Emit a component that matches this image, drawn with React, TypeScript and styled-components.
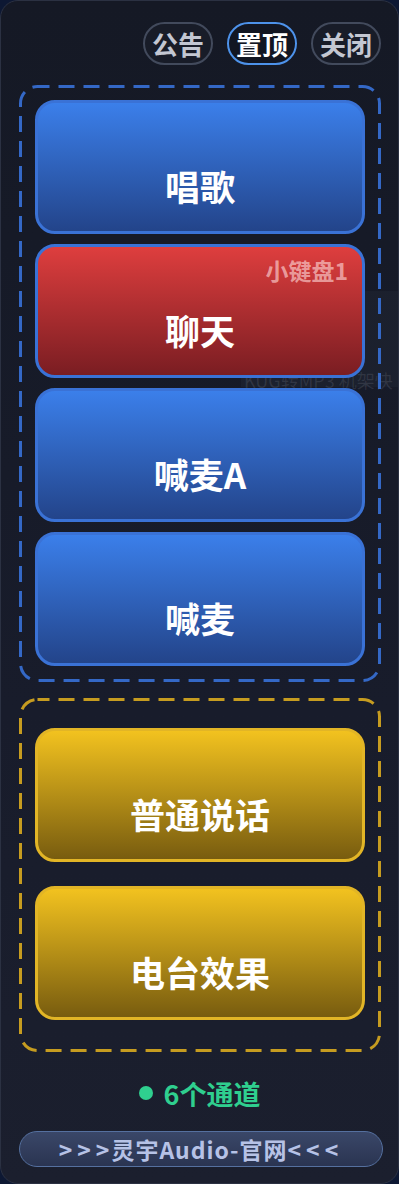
import styled, { createGlobalStyle } from "styled-components";

const GlobalStyle = createGlobalStyle`
  html, body {
    margin: 0;
    padding: 0;
    background: #0d1833;
  }
  * {
    box-sizing: border-box;
  }
`;

type Tone = "blue" | "red" | "yellow";

const tones: Record<Tone, { top: string; bottom: string; border: string }> = {
  blue: { top: "#3b7fea", bottom: "#23448a", border: "#3a72d6" },
  red: { top: "#de3e3e", bottom: "#7a1d22", border: "#3a72d6" },
  yellow: { top: "#f2c21f", bottom: "#785c0f", border: "#e2b526" },
};

const channels: { label: string; tone: Tone; badge?: string }[] = [
  { label: "唱歌", tone: "blue" },
  { label: "聊天", tone: "red", badge: "小键盘1" },
  { label: "喊麦A", tone: "blue" },
  { label: "喊麦", tone: "blue" },
];

const voices = ["普通说话", "电台效果"];

// dashed rounded frame drawn behind the group content
const DashFrame = ({ color }: { color: string }) => (
  <S.Frame aria-hidden>
    <S.FrameRect stroke={color} />
  </S.Frame>
);

export default function App() {
  return (
    <>
      <GlobalStyle />
      <S.Panel>
        <S.Ghost>
          <S.GhostText>KUG转MP3 机架快</S.GhostText>
        </S.Ghost>
        <S.Header>
          <S.Pill>公告</S.Pill>
          <S.Pill $active>置顶</S.Pill>
          <S.Pill>关闭</S.Pill>
        </S.Header>

        <S.Group $pad="15px 16px 16px" $gap="10px">
          <DashFrame color="#3468c6" />
          {channels.map((c) => (
            <S.Channel key={c.label} $tone={c.tone}>
              {c.badge && <S.Badge>{c.badge}</S.Badge>}
              {c.label}
            </S.Channel>
          ))}
        </S.Group>

        <S.Group $pad="30px 16px 32px" $gap="24px">
          <DashFrame color="#c69c20" />
          {voices.map((v) => (
            <S.Channel key={v} $tone="yellow">
              {v}
            </S.Channel>
          ))}
        </S.Group>

        <S.Status>
          <S.Dot />6个通道
        </S.Status>

        <S.Footer>
          <S.Arrows>&gt;&gt;&gt;</S.Arrows>灵宇Audio-官网<S.Arrows>&lt;&lt;&lt;</S.Arrows>
        </S.Footer>
      </S.Panel>
    </>
  );
}

const S = {
  Panel: styled.div`
    position: relative;
    width: 399px;
    height: 1184px;
    display: flex;
    flex-direction: column;
    padding: 21px 17px 0;
    border: 1px solid #2b3142;
    border-radius: 18px;
    background: linear-gradient(180deg, #151925 0%, #181c2b 60%, #1b1f2e 100%);
    font-family: "Noto Sans CJK SC", "Noto Sans", sans-serif;
    font-weight: 700;
    overflow: hidden;
  `,

  Ghost: styled.div`
    position: absolute;
    left: 240px;
    top: 290px;
    width: 159px;
    height: 96px;
    background: rgba(120, 130, 150, 0.06);
  `,

  GhostText: styled.span`
    position: absolute;
    left: 3px;
    bottom: -6px;
    font-size: 18px;
    font-weight: 400;
    color: rgba(200, 205, 220, 0.12);
    white-space: nowrap;
  `,

  Header: styled.div`
    display: flex;
    justify-content: flex-end;
    gap: 14px;
    height: 43px;
  `,

  Pill: styled.button<{ $active?: boolean }>`
    height: 43px;
    padding: 0 7px;
    border-radius: 22px;
    border: 2px solid ${(p) => (p.$active ? "#4d92ea" : "#424a5c")};
    background: ${(p) => (p.$active ? "#121622" : "#181c28")};
    color: ${(p) => (p.$active ? "#ffffff" : "#c3c7d2")};
    font-family: inherit;
    font-weight: 700;
    font-size: 26px;
    line-height: 1;
    display: flex;
    align-items: center;
  `,

  Group: styled.div<{ $pad: string; $gap: string }>`
    position: relative;
    display: flex;
    flex-direction: column;
    gap: ${(p) => p.$gap};
    margin-top: 20px;
    margin-left: 1px;
    width: 362px;
    padding: ${(p) => p.$pad};

    & + & {
      margin-top: 16px;
    }
  `,

  Frame: styled.svg`
    position: absolute;
    inset: 0;
    width: 100%;
    height: 100%;
    overflow: visible;
    pointer-events: none;
  `,

  FrameRect: styled.rect`
    x: 1.5px;
    y: 1.5px;
    width: calc(100% - 3px);
    height: calc(100% - 3px);
    rx: 17px;
    ry: 17px;
    fill: none;
    stroke-width: 3px;
    stroke-dasharray: 16 9;
    stroke-dashoffset: 4;
  `,

  Channel: styled.div<{ $tone: Tone }>`
    position: relative;
    height: 134px;
    display: flex;
    align-items: center;
    justify-content: center;
    padding-top: 36px;
    border: 3px solid ${(p) => tones[p.$tone].border};
    border-radius: 20px;
    background: linear-gradient(
      180deg,
      ${(p) => tones[p.$tone].top} 0%,
      ${(p) => tones[p.$tone].bottom} 100%
    );
    color: #ffffff;
    font-size: 35px;
    line-height: 1;
  `,

  Badge: styled.span`
    position: absolute;
    top: 12px;
    right: 14px;
    font-size: 23px;
    line-height: 1;
    color: rgba(255, 220, 220, 0.62);
  `,

  Status: styled.div`
    margin-top: 24px;
    display: flex;
    align-items: center;
    justify-content: center;
    gap: 11px;
    height: 34px;
    color: #2fcf8f;
    font-size: 27px;
    line-height: 1;
  `,

  Dot: styled.span`
    width: 14px;
    height: 14px;
    border-radius: 50%;
    background: #2fcf8f;
  `,

  Footer: styled.div`
    margin-top: 21px;
    margin-left: 1px;
    width: 364px;
    height: 36px;
    display: flex;
    align-items: center;
    justify-content: center;
    border: 1px solid #55709f;
    border-radius: 18px;
    background: linear-gradient(180deg, #3a4768 0%, #2a3451 100%);
    color: #b6c2e6;
    font-size: 23px;
    letter-spacing: 1px;
    line-height: 1;
    white-space: nowrap;
  `,

  Arrows: styled.span`
    letter-spacing: 5px;

    &:first-child {
      margin-right: -3px;
    }
  `,
};
